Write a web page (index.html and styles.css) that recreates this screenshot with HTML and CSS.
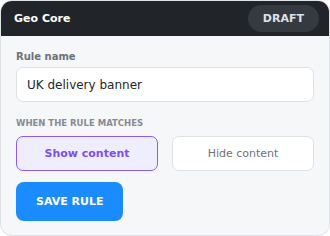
FILE: index.html
```html
<!DOCTYPE html>
<html lang="en">
<head>
    <meta charset="UTF-8">
    <meta name="viewport" content="width=device-width, initial-scale=1.0">
    <title>Geo Core</title>
    <link rel="stylesheet" href="styles.css">
</head>
<body>
    <div class="card">
        <div class="card-header">
            <span class="title">Geo Core</span>
            <span class="badge">DRAFT</span>
        </div>

        <div class="card-body">
            <label class="field-label" for="rule-name">Rule name</label>
            <input class="text-input" id="rule-name" type="text" value="UK delivery banner">

            <p class="section-label">When the rule matches</p>
            <div class="choices">
                <button class="choice active">Show content</button>
                <button class="choice">Hide content</button>
            </div>

            <button class="save-button">Save rule</button>
        </div>
    </div>
</body>
</html>
```

FILE: styles.css
```css
body {
    font-family: "DejaVu Sans", Verdana, sans-serif;
    margin: 0;
    padding: 0;
    background-color: #fff;
}

.card {
    width: 330px;
    height: 236px;
    box-sizing: border-box;
    border: 1px solid #dfe2e7;
    border-radius: 12px;
    overflow: hidden;
    background-color: #f6f7f9;
}

.card-header {
    display: flex;
    justify-content: space-between;
    align-items: center;
    height: 36px;
    padding: 0 11px 0 14px;
    margin: -1px -1px 0 -1px;
    background-color: #212529;
}

.title {
    color: #fff;
    font-size: 11px;
    font-weight: bold;
}

.badge {
    background-color: #343a40;
    color: #dee2e6;
    font-size: 11px;
    font-weight: bold;
    padding: 7px 15px;
    border-radius: 14px;
}

.card-body {
    display: flex;
    flex-direction: column;
    align-items: flex-start;
    padding: 15px 15px 0 15px;
}

.field-label {
    color: #6c727c;
    font-size: 10px;
    font-weight: bold;
    margin-bottom: 5px;
}

.text-input {
    width: 100%;
    height: 35px;
    box-sizing: border-box;
    border: 1px solid #dee2e6;
    border-radius: 7px;
    background-color: #fff;
    padding: 0 10px;
    font-family: inherit;
    font-size: 12px;
    color: #212529;
}

.section-label {
    margin: 16px 0 8px 0;
    color: #868b94;
    font-size: 8.5px;
    font-weight: bold;
    text-transform: uppercase;
}

.choices {
    display: grid;
    grid-template-columns: 1fr 1fr;
    gap: 14px;
    width: 100%;
}

.choice {
    height: 35px;
    border: 1px solid #dee2e6;
    border-radius: 7px;
    background-color: #fff;
    color: #6c727c;
    font-family: inherit;
    font-size: 11px;
    cursor: pointer;
}

.choice.active {
    border-color: #8b5cf6;
    background-color: #efeefe;
    color: #7c4ff0;
    font-weight: bold;
}

.save-button {
    margin-top: 11px;
    height: 39px;
    padding: 0 20px;
    border: none;
    border-radius: 8px;
    background-color: #1a8cff;
    color: #fff;
    font-family: inherit;
    font-size: 11px;
    font-weight: bold;
    text-transform: uppercase;
    cursor: pointer;
}
```
